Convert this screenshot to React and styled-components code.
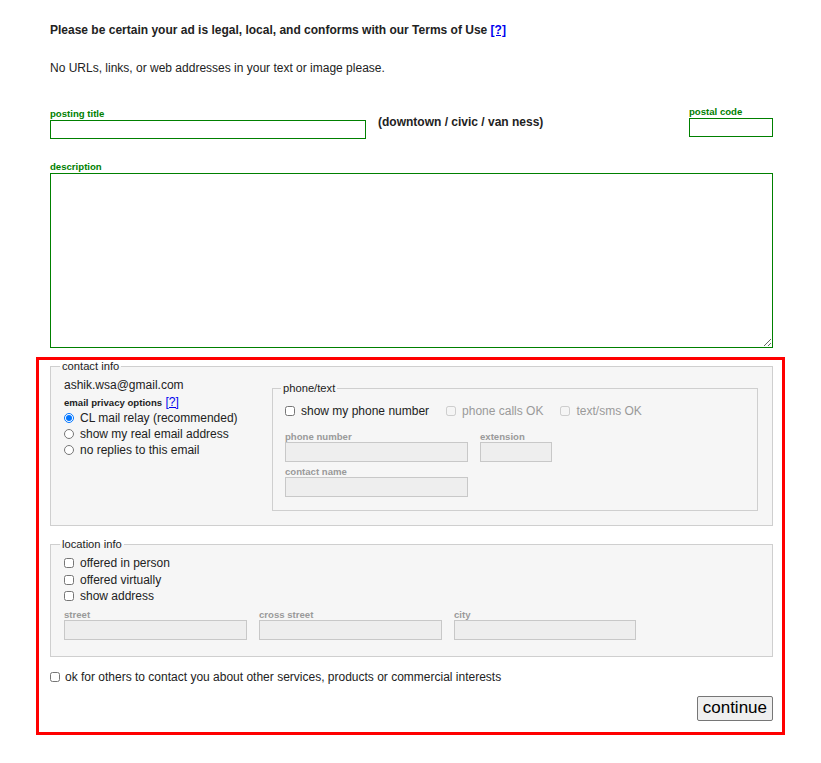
import React from 'react';
import styled, { createGlobalStyle } from 'styled-components';

const GlobalStyle = createGlobalStyle`
    body {
        margin: 0;
        background: #fff;
        color: #222;
        font-family: "Liberation Sans", Arial, sans-serif;
        font-size: 12px;
    }
`;

const App = () => {
    return (
        <>
            <GlobalStyle />
            <Page>
                <Heading>
                    Please be certain your ad is legal, local, and conforms with our Terms of Use <Help href="#">[?]</Help>
                </Heading>
                <Note>No URLs, links, or web addresses in your text or image please.</Note>

                <TitleRow>
                    <Field>
                        <GreenLabel>posting title</GreenLabel>
                        <GreenInput $width={316} />
                    </Field>
                    <Area>(downtown / civic / van ness)</Area>
                    <Field $push $lift={2}>
                        <GreenLabel>postal code</GreenLabel>
                        <GreenInput $width={84} />
                    </Field>
                </TitleRow>

                <Field $top={22}>
                    <GreenLabel>description</GreenLabel>
                    <Description />
                </Field>

                <RedBox>
                    <Box>
                        <Legend>contact info</Legend>
                        <ContactGrid>
                            <div>
                                <Email>ashik.wsa@gmail.com</Email>
                                <Privacy>
                                    <b>email privacy options</b> <Help href="#" $normal>[?]</Help>
                                </Privacy>
                                <Option>
                                    <Radio name="privacy" defaultChecked />
                                    CL mail relay (recommended)
                                </Option>
                                <Option>
                                    <Radio name="privacy" />
                                    show my real email address
                                </Option>
                                <Option>
                                    <Radio name="privacy" />
                                    no replies to this email
                                </Option>
                            </div>
                            <PhoneBox>
                                <Legend>phone/text</Legend>
                                <CheckRow>
                                    <Option>
                                        <Check />
                                        show my phone number
                                    </Option>
                                    <Option $disabled>
                                        <Check disabled />
                                        phone calls OK
                                    </Option>
                                    <Option $disabled>
                                        <Check disabled />
                                        text/sms OK
                                    </Option>
                                </CheckRow>
                                <InputRow $top={12}>
                                    <div>
                                        <GrayLabel>phone number</GrayLabel>
                                        <GrayInput $width={183} disabled />
                                    </div>
                                    <div>
                                        <GrayLabel>extension</GrayLabel>
                                        <GrayInput $width={72} disabled />
                                    </div>
                                </InputRow>
                                <InputRow $top={4}>
                                    <div>
                                        <GrayLabel>contact name</GrayLabel>
                                        <GrayInput $width={183} disabled />
                                    </div>
                                </InputRow>
                            </PhoneBox>
                        </ContactGrid>
                    </Box>

                    <Box $top={12} $pad={5} $bottom={16}>
                        <Legend>location info</Legend>
                        <Option $height={16.5}>
                            <Check />
                            offered in person
                        </Option>
                        <Option $height={16.5}>
                            <Check />
                            offered virtually
                        </Option>
                        <Option $height={16.5}>
                            <Check />
                            show address
                        </Option>
                        <InputRow $top={4}>
                            <div>
                                <GrayLabel>street</GrayLabel>
                                <GrayInput $width={183} disabled />
                            </div>
                            <div>
                                <GrayLabel>cross street</GrayLabel>
                                <GrayInput $width={183} disabled />
                            </div>
                            <div>
                                <GrayLabel>city</GrayLabel>
                                <GrayInput $width={182} disabled />
                            </div>
                        </InputRow>
                    </Box>

                    <Option $top={12} $gap={5}>
                        <Check />
                        ok for others to contact you about other services, products or commercial interests
                    </Option>

                    <ButtonRow>
                        <Continue type="button">continue</Continue>
                    </ButtonRow>
                </RedBox>
            </Page>
        </>
    );
};

const Page = styled.div`
    width: 723px;
    padding: 23px 0 20px 50px;
`;

const Heading = styled.div`
    font-weight: bold;
    line-height: 14px;
`;

const Help = styled.a`
    color: #0000ee;
    font-weight: ${(p) => (p.$normal ? 'normal' : 'bold')};
    text-decoration: underline;
`;

const Note = styled.div`
    margin-top: 24px;
    line-height: 14px;
`;

const TitleRow = styled.div`
    display: flex;
    align-items: flex-start;
    margin-top: 33px;
`;

const Field = styled.div`
    display: flex;
    flex-direction: column;
    margin-top: ${(p) => (p.$top || 0) - (p.$lift || 0)}px;
    margin-left: ${(p) => (p.$push ? 'auto' : '0')};
`;

const GreenLabel = styled.label`
    color: #008000;
    font-size: 9.6px;
    font-weight: bold;
    line-height: 12px;
`;

const GreenInput = styled.input`
    box-sizing: border-box;
    width: ${(p) => p.$width}px;
    height: 19px;
    margin: 0;
    border: 1px solid #008000;
    padding: 0 3px;
    background: #fff;
    outline: none;
`;

const Area = styled.div`
    margin: 7px 0 0 12px;
    font-weight: bold;
    line-height: 14px;
`;

const Description = styled.textarea`
    display: block;
    box-sizing: border-box;
    width: 723px;
    height: 175px;
    margin: 0;
    border: 1px solid #008000;
    padding: 2px;
    background: #fff;
    outline: none;
`;

const RedBox = styled.div`
    margin: 9px -12px 0 -14px;
    border: 3px solid #ff0000;
    padding: 0 9px 11px 11px;
`;

const Box = styled.fieldset`
    margin: ${(p) => p.$top || 0}px 0 0;
    padding: ${(p) => p.$pad || 5}px 13px ${(p) => p.$bottom || 14}px;
    border: 1px solid #cfcfcf;
    background: #f6f6f6;
    min-width: 0;
`;

const Legend = styled.legend`
    margin-left: -4px;
    padding: 0 2px;
    font-size: 11.2px;
    line-height: 12px;
    color: #222;
`;

const ContactGrid = styled.div`
    display: grid;
    grid-template-columns: 208px 486px;
`;

const Email = styled.div`
    line-height: 16px;
    margin-bottom: 2px;
`;

const Privacy = styled.div`
    line-height: 14px;

    & b {
        font-size: 9.6px;
    }
`;

const Option = styled.label`
    display: flex;
    align-items: center;
    gap: ${(p) => p.$gap || 6}px;
    height: ${(p) => p.$height || 16}px;
    margin-top: ${(p) => p.$top || 0}px;
    color: ${(p) => (p.$disabled ? '#9a9a9a' : '#222')};
    white-space: nowrap;
`;

const Radio = styled.input.attrs({ type: 'radio' })`
    width: 10px;
    height: 10px;
    margin: 0;
`;

const Check = styled.input.attrs({ type: 'checkbox' })`
    width: 10px;
    height: 10px;
    margin: 0;
`;

const PhoneBox = styled.fieldset`
    margin: 5px 0 0;
    padding: 9px 12px 13px;
    border: 1px solid #cfcfcf;
    background: #f6f6f6;
    min-width: 0;
`;

const CheckRow = styled.div`
    display: flex;
    gap: 17px;
`;

const InputRow = styled.div`
    display: flex;
    gap: 12px;
    margin-top: ${(p) => p.$top}px;
`;

const GrayLabel = styled.div`
    color: #9a9a9a;
    font-size: 9.6px;
    font-weight: bold;
    line-height: 11px;
`;

const GrayInput = styled.input`
    display: block;
    box-sizing: border-box;
    width: ${(p) => p.$width}px;
    height: 20px;
    margin: 0;
    border: 1px solid #c8c8c8;
    background: #eeeeee;
`;

const ButtonRow = styled.div`
    display: flex;
    justify-content: flex-end;
    margin-top: 11px;
`;

const Continue = styled.button`
    height: 25px;
    padding: 0 5px;
    border: 1px solid #767676;
    border-radius: 2px;
    background: #efefef;
    color: #000;
    font-family: "Liberation Sans", Arial, sans-serif;
    font-size: 17px;
`;

export default App;
